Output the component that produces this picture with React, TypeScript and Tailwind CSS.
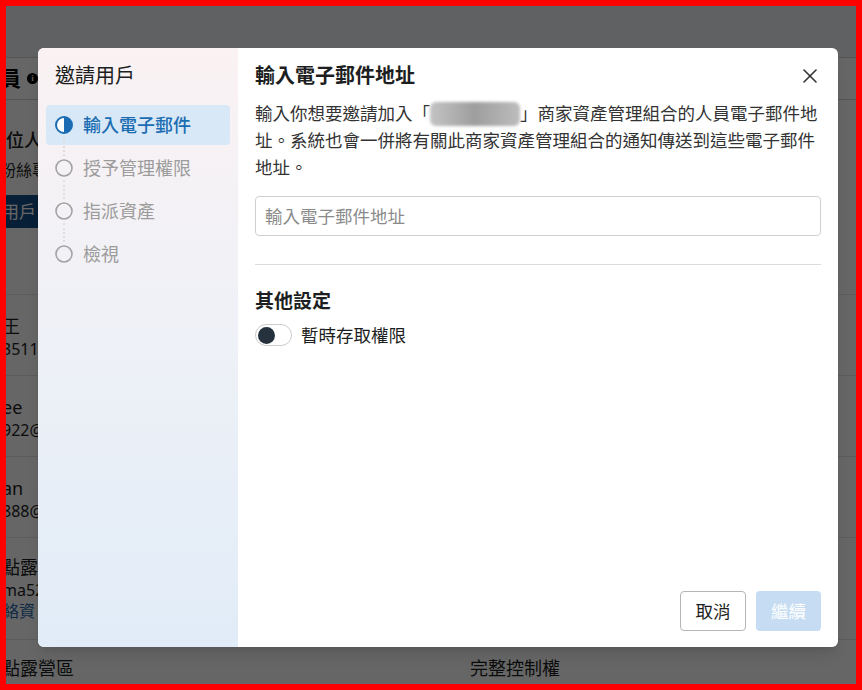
import { X } from "lucide-react";

// Steps shown down the left side of the invite dialog
const steps = [
  { label: "輸入電子郵件", state: "active" },
  { label: "授予管理權限", state: "todo" },
  { label: "指派資產", state: "todo" },
  { label: "檢視", state: "todo" },
];

const font = "font-['Noto_Sans','Noto_Sans_CJK_TC',sans-serif]";

function StepIcon({ active }: { active: boolean }) {
  if (active) {
    return (
      <svg width="18" height="18" viewBox="0 0 18 18" className="shrink-0">
        <circle cx="9" cy="9" r="8" fill="white" stroke="#1b6db3" strokeWidth="2" />
        <path d="M9 1 A8 8 0 0 1 9 17 Z" fill="#1b6db3" />
      </svg>
    );
  }
  return (
    <svg width="18" height="18" viewBox="0 0 18 18" className="shrink-0">
      <circle cx="9" cy="9" r="8" fill="none" stroke="#a3a3a3" strokeWidth="1.6" />
    </svg>
  );
}

// Member list sitting behind the dialog
function MemberRow({ name, sub, extra }: { name: string; sub: string; extra?: string }) {
  return (
    <div className={`flex flex-col border-b border-gray-200 ${extra ? "h-[102px] pt-[17px]" : "h-[81px] pt-[19px]"}`}>
      <span className="text-[18px] leading-[24px] text-[#1c1e21] -ml-[4px]">{name}</span>
      <span className="text-[16px] leading-[22px] text-[#1c1e21] -ml-[4px]">{sub}</span>
      {extra && <span className="text-[16px] leading-[20px] text-[#2a6cb0] -ml-[3px]">{extra}</span>}
    </div>
  );
}

function BackgroundPage() {
  return (
    <div className="flex flex-col w-full bg-white">
      <div className="h-[52px] bg-[#f0f2f5] border-b border-gray-300" />
      <div className="flex items-center gap-[6px] h-[42px] border-b border-gray-300">
        <span className="text-[21px] font-semibold text-black -ml-[6px]">員</span>
        <span className="w-[11px] h-[11px] rounded-full bg-black text-white text-[8px] font-bold leading-[11px] text-center font-serif">i</span>
      </div>
      <div className="flex flex-col pt-[27px]">
        <span className="text-[18px] leading-[26px] font-medium text-[#1c1e21]">位人</span>
        <span className="mt-[4px] text-[16px] leading-[26px] text-[#1c1e21] -ml-[6px]">粉絲專</span>
        <div className="mt-[12px] h-[33px] w-[60px] -ml-[10px] bg-[#14508a] text-white text-[17px] leading-[33px] pl-[6px]">
          用戶
        </div>
      </div>
      <div className="h-[67px] border-b border-gray-200" />
      <MemberRow name="王" sub="3511@" />
      <MemberRow name="ee" sub="922@" />
      <MemberRow name="an" sub="888@" />
      <MemberRow name="點露" sub="ma52" extra="絡資" />
      <div className="flex items-center h-[56px] text-[18px] text-[#1c1e21]">
        <span className="-ml-[4px] w-[468px]">點露營區</span>
        <span>完整控制權</span>
      </div>
    </div>
  );
}

export default function App() {
  return (
    <div className={`relative w-[862px] h-[690px] overflow-hidden border-[6px] border-[#ff0000] ${font}`}>
      <BackgroundPage />
      <div className="absolute inset-0 bg-black/60" />

      {/* Invite dialog */}
      <div className="absolute left-[32px] top-[42px] w-[800px] h-[599px] flex rounded-[6px] overflow-hidden bg-white shadow-lg">
        <aside className="w-[200px] shrink-0 flex flex-col px-[8px] pt-[15px] bg-linear-to-b from-[#faf2f3] via-[#eef1f7] to-[#e1ecf8]">
          <h2 className="pl-[9px] text-[20px] leading-[26px] text-[#1c1e21]">邀請用戶</h2>
          <div className="mt-[16px] flex flex-col gap-[3px]">
            {steps.map((s, i) => {
              const active = s.state === "active";
              return (
                <div
                  key={s.label}
                  className={`relative flex items-center gap-[10px] h-[40px] pl-[9px] rounded-[4px] ${active ? "bg-[#d9e8f6]" : ""}`}
                >
                  <StepIcon active={active} />
                  <span className={`text-[18px] ${active ? "text-[#1b6db3] font-medium" : "text-[#9c9c9c]"}`}>
                    {s.label}
                  </span>
                  {i < steps.length - 1 && (
                    <span className="absolute left-[17px] top-[32px] h-[19px] border-l-2 border-dotted border-[#dedede]" />
                  )}
                </div>
              );
            })}
          </div>
        </aside>

        <section className="flex-1 flex flex-col px-[17px] pt-[16px] pb-[16px]">
          <div className="flex items-center justify-between h-[24px]">
            <h1 className="text-[20px] font-bold text-[#1c1e21]">輸入電子郵件地址</h1>
            <X size={24} strokeWidth={1.6} className="text-[#333] mr-[-1px]" />
          </div>

          <p className="mt-[12px] text-[17.5px] leading-[27px] text-[#333]">
            輸入你想要邀請加入「
            <span className="inline-block align-[-6px] w-[90px] h-[24px] rounded-[6px] bg-linear-to-r from-[#c4c4c4] via-[#9e9e9e] to-[#bdbdbd] blur-[1.5px]" />
            」商家資產管理組合的人員電子郵件地址。系統也會一併將有關此商家資產管理組合的通知傳送到這些電子郵件地址。
          </p>

          <input
            type="text"
            placeholder="輸入電子郵件地址"
            className="mt-[15px] h-[40px] w-full rounded-[4px] border border-[#cfcfcf] px-[9px] text-[17.5px] placeholder:text-[#8a8a8a] outline-none"
          />

          <div className="mt-[28px] border-t border-[#dcdcdc]" />

          <h3 className="mt-[24px] text-[19px] leading-[24px] font-bold text-[#1c1e21]">其他設定</h3>
          <div className="mt-[10px] flex items-center gap-[9px] h-[24px]">
            <div className="w-[37px] h-[22px] rounded-full border border-[#cccccc] bg-white flex items-center pl-[2px]">
              <div className="w-[17px] h-[17px] rounded-full bg-[#25323e]" />
            </div>
            <span className="text-[17.5px] text-[#1c1e21]">暫時存取權限</span>
          </div>

          <div className="mt-auto flex justify-end gap-[10px]">
            <button className="h-[40px] w-[66px] rounded-[4px] border border-[#b5b5b5] bg-white text-[17.5px] text-[#1c1e21]">
              取消
            </button>
            <button className="h-[40px] w-[65px] rounded-[4px] bg-[#c5dcf2] text-[17.5px] text-white">
              繼續
            </button>
          </div>
        </section>
      </div>
    </div>
  );
}
